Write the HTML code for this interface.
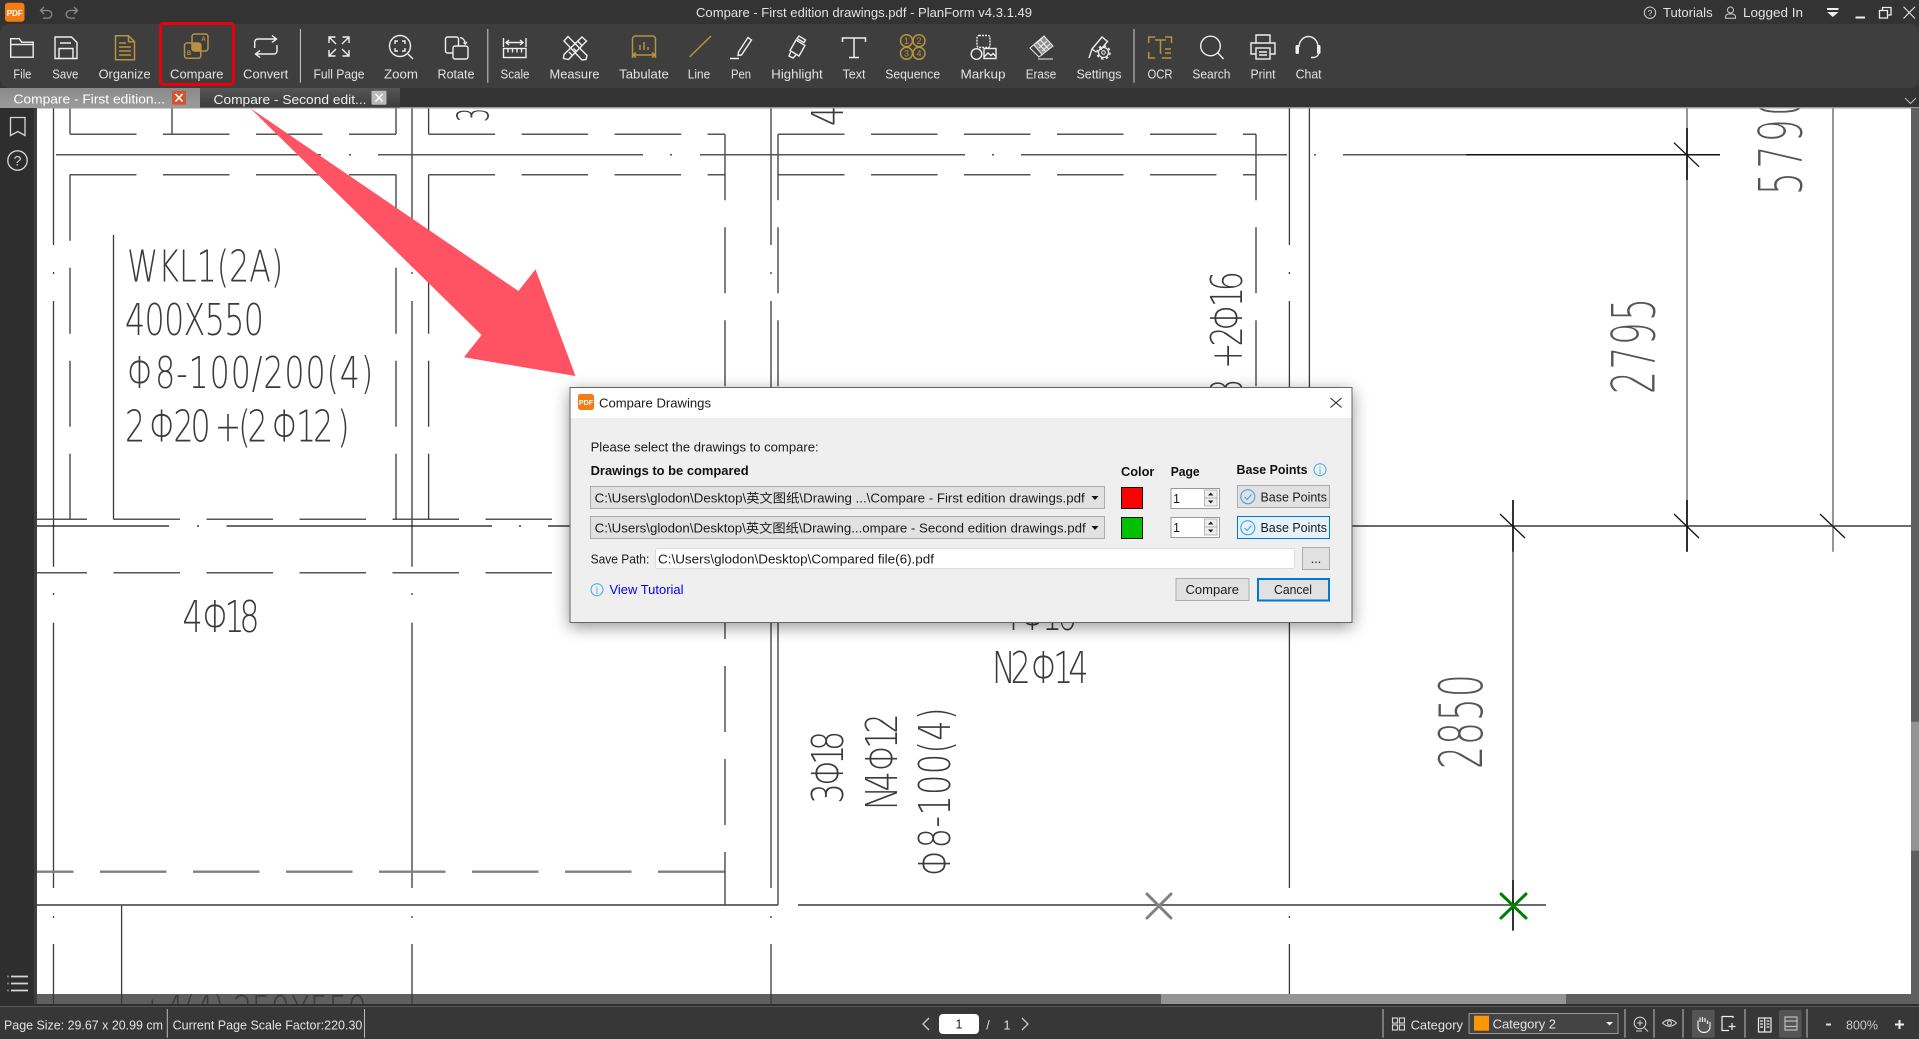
<!DOCTYPE html>
<html lang="en"><head><meta charset="utf-8"><title>Compare - First edition drawings.pdf - PlanForm v4.3.1.49</title>
<style>
html,body{margin:0;padding:0;background:#fff;overflow:hidden}
svg{display:block}
.c{font-family:"DejaVu Sans","Liberation Sans",sans-serif;font-weight:200;fill:#3a3a3a;font-size:44px}
.h{font-size:60px;fill:#555}
.t{font-family:"Liberation Sans","Noto Sans CJK SC",sans-serif;font-size:12.5px;fill:#e2e2e2}
.l{text-anchor:middle}
.d{fill:#1a1a1a}
.b{font-weight:bold;fill:#111}
.w{stroke:#eee;stroke-width:1.4;fill:none}
.g{stroke:#b8923f;stroke-width:1.5;fill:none}
</style></head><body>
<svg width="1919" height="1039" viewBox="0 0 1919 1039" xmlns="http://www.w3.org/2000/svg">
<rect width="1919" height="1039" fill="#fff"/>

<!-- drawing -->
<g fill="none" stroke="#3a3a3a" stroke-width="1.3">
<path d="M53.5 108V245M53.5 272v2M53.5 301V566.700M53.5 593v2M53.500 622.700V888M53.500 916v2M53.500 944V1039"/>
<path d="M412 108V245M412 272v2M412 301V566.700M412 593v2M412 622.700V888M412 916v2M412 944V1039"/>
<path d="M771 108V245M771 272v2M771 301V566.700M771 593v2M771 622.700V888M771 916v2M771 944V1039"/>
<path d="M1289.400 108V245M1289.400 272v2M1289.400 301V566.700M1289.400 593v2M1289.400 622.700V888M1289.400 916v2M1289.400 944V1039"/>
<path d="M1309.400 108V400"/>
<path d="M70 108v26M172 108v26M396 108v26M428.600 108v26M113.500 235V519.300M121.600 905V1039M778 622V905M1513 500V931"/>
<g stroke-dasharray="66.500 26.500" stroke="#555" stroke-width="1.500">
<path d="M70 134.300H396M428.600 134.300H725M778 134.300H1256M70 174.700H396M428.600 174.700H725M778 174.700H1256"/>
<path d="M20.500 519.300H640M20.500 572.700H640"/>
</g>
<g stroke-dasharray="66 27">
<path d="M70 174.700V519.300M396 174.700V519.300M428.600 174.700V519.300M725 134.300V400M778 134.300V400M1256 134.300V400M725 573V905"/>
</g>
<path stroke="#555" stroke-width="1.500" d="M56 154.700H321M349 154.700h2M378 154.700H643M670 154.700h2M700 154.700H965M992 154.700h2M1021 154.700H1287M1314 154.700h2M1343 154.700H1466"/>
<path stroke="#111" stroke-width="1.500" d="M1466 154.700H1720"/>
<path stroke="#111" stroke-width="1.300" d="M37 526H169M197 526h2M226.500 526H492M519 526h2M548 526H580M1352 526H1911"/>
<path stroke="#555" stroke-width="1.800" d="M37 905H778M798 905H1546"/>
<path stroke="#808080" stroke-width="2.400" stroke-dasharray="66.500 26.500" d="M7 871.700H724.500"/>
<path stroke="#8a8a8a" stroke-width="1.800" d="M1687 108V551.700M1833 108V551.700"/>
<path stroke="#111" stroke-width="1.600" d="M1687 128V180M1687 500V551.700M1513 500V551.700M1513 880V930"/>
<path stroke="#111" stroke-width="1.300" d="M1674 142.700L1699 166.700M1500 514L1525 538M1674 514L1699 538M1820 514L1845 538"/>
<path stroke="#808080" stroke-width="3" stroke-linecap="round" d="M1147 894L1171 918M1171 894L1147 918"/>
<path stroke="#008000" stroke-width="3" stroke-linecap="round" d="M1501 894L1526 918M1526 894L1501 918"/>
</g>

<g>
<text class="c" transform="translate(127 281.700) scale(.72 1)" textLength="217">WKL1(2A)</text>
<text class="c" transform="translate(125 335) scale(.72 1)" textLength="193">400X550</text>
<text class="c" transform="translate(127 388) scale(.72 1)" textLength="342">Φ8-100/200(4)</text>
<text class="c" transform="translate(125 441.700) scale(.72 1)" textLength="312">2 Φ20 +(2 Φ12 )</text>
<text class="c" transform="translate(182.500 632) scale(.72 1)" textLength="107">4 Φ18</text>
<text class="c" transform="translate(992 683) scale(.72 1)" textLength="134">N2 Φ14</text>
<text class="c" transform="translate(1000 630) scale(.72 1)" textLength="107">4 Φ16</text>
<text class="c" transform="translate(139 1027) scale(.72 1)" textLength="317">+4(4) 250X550</text>
<text class="c" transform="translate(488.600 122) rotate(-90) scale(.5 1)">3</text>
<text class="c" transform="translate(843 126) rotate(-90) scale(.72 1)">4</text>
<text class="c" transform="translate(1242 369) rotate(-90) scale(.72 1)" textLength="136">+2Φ16</text>
<text class="c" transform="translate(1242 399) rotate(-90) scale(.72 1)">8</text>
<text class="c h" transform="translate(1801.600 195) rotate(-90) scale(.6 1)" textLength="170">5790</text>
<text class="c h" transform="translate(1654.700 394) rotate(-90) scale(.6 1)" textLength="160">2795</text>
<text class="c h" transform="translate(1482 769) rotate(-90) scale(.6 1)" textLength="158">2850</text>
<text class="c" transform="translate(843 803.500) rotate(-90) scale(.72 1)" textLength="101">3 Φ18</text>
<text class="c" transform="translate(897 810) rotate(-90) scale(.72 1)" textLength="134">N4 Φ12</text>
<text class="c" transform="translate(950 876) rotate(-90) scale(.72 1)" textLength="234">Φ8-100(4)</text>
</g>

<!-- arrow -->
<polygon fill="#ff5263" points="250,108 518.400,291 535.500,269.300 575.500,376 464,357.300 481.600,335"/>

<!-- chrome -->
<rect x="0" y="0" width="1919" height="108" fill="#333"/>
<rect x="0" y="24" width="1919" height="64" rx="9" fill="#3e3e3e"/>
<rect x="0" y="107" width="1919" height="1.500" fill="#999"/>
<rect x="0" y="108" width="34" height="898" fill="#2e2e2e"/>
<rect x="34" y="108" width="3" height="898" fill="#3e3e3e"/>
<rect x="1911" y="108" width="8" height="886" fill="#5f5f5f"/>
<rect x="1911" y="721.700" width="8" height="129" fill="#949494"/>
<rect x="37" y="994" width="1882" height="10" fill="rgba(60,60,60,.82)"/>
<rect x="1161" y="994" width="405" height="10" fill="#949494"/>
<rect x="0" y="1004" width="1919" height="35" fill="#373737"/>
<rect x="0" y="1004" width="1919" height="2" fill="#2e2e2e"/>
<rect x="0" y="1006" width="1919" height="1" fill="#5a5a5a"/>

<!-- title bar -->
<rect x="5" y="2.700" width="19.500" height="19" rx="3" fill="#f57c14"/>
<text x="14.700" y="16" text-anchor="middle" style="font:bold 8px 'Liberation Sans',sans-serif;fill:#fff">PDF</text>
<g fill="none" stroke="#8a8a8a" stroke-width="1.300">
<path d="M44 7l-3.500 3.500 3.500 3.500M41 10.500h7a3.800 3.800 0 0 1 0 7.600h-5"/>
<path d="M74 7l3.500 3.500-3.500 3.500M77 10.500h-7a3.800 3.800 0 0 0 0 7.600h5"/>
</g>
<text class="t" x="696" y="17" textLength="336" lengthAdjust="spacingAndGlyphs">Compare - First edition drawings.pdf - PlanForm v4.3.1.49</text>
<circle cx="1650" cy="12.700" r="5.700" fill="none" stroke="#ccc"/>
<text x="1650" y="16" text-anchor="middle" style="font:8.500px 'Liberation Sans',sans-serif;fill:#ddd">?</text>
<text class="t" x="1663" y="17" textLength="49.600" lengthAdjust="spacingAndGlyphs">Tutorials</text>
<circle cx="1730.500" cy="10" r="3" fill="none" stroke="#ccc"/>
<path d="M1725.500 18.300v-1.300a3 3 0 0 1 3-3h4a3 3 0 0 1 3 3v1.300z" fill="none" stroke="#ccc"/>
<text class="t" x="1743" y="17" textLength="60" lengthAdjust="spacingAndGlyphs">Logged In</text>
<rect x="1827" y="8" width="11.500" height="2" fill="#eee"/><path d="M1827 12h11.500l-5.700 5z" fill="#eee"/>
<rect x="1855.500" y="16.500" width="9.500" height="2" fill="#eee"/>
<path d="M1879.500 10.500h8v7.500h-8zM1882.500 10.500v-3h8.500v7.500h-3.500" fill="none" stroke="#eee" stroke-width="1.300"/>
<path d="M1903.500 6.700L1915 18.500M1915 6.700L1903.500 18.500" stroke="#e4e4e4" stroke-width="1.100"/>

<!-- ribbon labels -->
<g>
<text class="t l" x="22.400" y="78.500" textLength="18" lengthAdjust="spacingAndGlyphs">File</text>
<text class="t l" x="65.300" y="78.500" textLength="26" lengthAdjust="spacingAndGlyphs">Save</text>
<text class="t l" x="124.600" y="78.500" textLength="52" lengthAdjust="spacingAndGlyphs">Organize</text>
<text class="t l" x="196.800" y="78.500" textLength="53.500" lengthAdjust="spacingAndGlyphs">Compare</text>
<text class="t l" x="265.700" y="78.500" textLength="45" lengthAdjust="spacingAndGlyphs">Convert</text>
<text class="t l" x="339" y="78.500" textLength="51" lengthAdjust="spacingAndGlyphs">Full Page</text>
<text class="t l" x="401" y="78.500" textLength="34" lengthAdjust="spacingAndGlyphs">Zoom</text>
<text class="t l" x="456" y="78.500" textLength="37" lengthAdjust="spacingAndGlyphs">Rotate</text>
<text class="t l" x="515" y="78.500" textLength="29" lengthAdjust="spacingAndGlyphs">Scale</text>
<text class="t l" x="574.500" y="78.500" textLength="50" lengthAdjust="spacingAndGlyphs">Measure</text>
<text class="t l" x="644" y="78.500" textLength="49.600" lengthAdjust="spacingAndGlyphs">Tabulate</text>
<text class="t l" x="699" y="78.500" textLength="22.400" lengthAdjust="spacingAndGlyphs">Line</text>
<text class="t l" x="741" y="78.500" textLength="20" lengthAdjust="spacingAndGlyphs">Pen</text>
<text class="t l" x="797" y="78.500" textLength="51.400" lengthAdjust="spacingAndGlyphs">Highlight</text>
<text class="t l" x="854" y="78.500" textLength="23" lengthAdjust="spacingAndGlyphs">Text</text>
<text class="t l" x="912.700" y="78.500" textLength="55" lengthAdjust="spacingAndGlyphs">Sequence</text>
<text class="t l" x="983" y="78.500" textLength="45" lengthAdjust="spacingAndGlyphs">Markup</text>
<text class="t l" x="1041" y="78.500" textLength="30.600" lengthAdjust="spacingAndGlyphs">Erase</text>
<text class="t l" x="1099" y="78.500" textLength="45" lengthAdjust="spacingAndGlyphs">Settings</text>
<text class="t l" x="1160" y="78.500" textLength="25" lengthAdjust="spacingAndGlyphs">OCR</text>
<text class="t l" x="1211.400" y="78.500" textLength="38" lengthAdjust="spacingAndGlyphs">Search</text>
<text class="t l" x="1263" y="78.500" textLength="25" lengthAdjust="spacingAndGlyphs">Print</text>
<text class="t l" x="1308.600" y="78.500" textLength="26" lengthAdjust="spacingAndGlyphs">Chat</text>
</g>
<path d="M300.400 29V82.700M487.800 29V82.700M1134 29V82.700" stroke="#ccc" stroke-width="1"/>
<rect x="160.500" y="23.500" width="73" height="61" rx="3" fill="none" stroke="#e8000b" stroke-width="3"/>

<!-- ribbon icons -->
<g class="w">
<path d="M10.700 38.700h8.500l2.500 3.500h11.500v15h-22.500zM10.700 44.500h22.500"/>
<path d="M55 37h16.500l5.500 5.500v16h-22zM59 58.500v-10h14v10M60 43h11"/>
<path d="M254.700 48v-6a3 3 0 0 1 3-3h19M272 35.500l4.500 3.500-4.500 3.500M277 45v6a3 3 0 0 1-3 3h-19M260 50.500l-4.500 3.500 4.500 3.500"/>
<path d="M336 44l-7-7M329 43v-6h6.500M342 44l7-7M342.500 37h6.500v6M336 49l-7 7M329 50v6h6.500M342 49l7 7M349 50v6h-6.500"/>
<circle cx="400" cy="46" r="10.500"/><path d="M408 54l5 5M395 44v-3h3M402 41h3v3M405 48v3h-3M398 51h-3v-3"/>
<rect x="445.500" y="37" width="13" height="16" rx="2"/><rect x="453" y="46" width="15" height="13" rx="2" fill="#3e3e3e"/><path d="M460 37.500a6 6 0 0 1 5 5M463.500 42.500l1.700 1.500 1.700-2"/>
<path d="M503.500 38v9M526 38v9M506 42.500h17M509 40l-3 2.500 3 2.500M520 40l3 2.500-3 2.500"/><rect x="503.500" y="48.500" width="22.500" height="9"/><path d="M508 48.500v4M512.500 48.500v4M517 48.500v4M521.500 48.500v4"/>
<path d="M564 41l4-4.500 19 19-1 4-4 .5zM582 37l4.500 4-18 18.500-5-1 .5-4zM578 41.500l4 4M572 55l-3-3M576 51l-2.500-2.500"/>
<path d="M741 55l-3 .5.5-3.500L748 37.500l3.500 2.500-10 15zM730 58.500h9"/>
<path d="M797 38.500l2-2.500 6.500 4-1.500 2.500zM796 40l9 5.500-6 10.500-9-5.500zM791 51l-2 5 4 2 3-3"/>
<path d="M842.500 42v-4h23v4M854 38v19M849 57.500h10" stroke-width="1.500"/>
<rect x="977" y="35.500" width="13" height="12" rx="2" stroke-dasharray="2 1"/><circle cx="976.500" cy="54" r="5.300"/><rect x="984" y="48.500" width="12" height="10"/><path d="M984 57l4-4 3 2.500 2-2 3 3"/>
<polygon points="1044,36 1053,46 1042.500,55 1034,45" fill="#8f8f8f" stroke="none"/>
<path d="M1044 36l9 10-14 11-9-9zM1034 45l8.500 10M1038 59h15M1037 42l9 10M1040 39.500l9 10M1043 37.500l-7 6M1047 41l-8 7M1050 44l-8 7" stroke-width="1"/>
<path d="M1089 58l3-9 10-12 5.500 4.500-7 8.500M1092 49l4 3"/>
<circle cx="1103.500" cy="52.500" r="5" stroke-width="1.200"/><circle cx="1103.500" cy="52.500" r="6.500" stroke-width="1.600" stroke-dasharray="2.500 2.600"/><circle cx="1103.500" cy="52.500" r="1.800" stroke-width="1"/>
<circle cx="1210.500" cy="46" r="9.800"/><path d="M1218 53l5.500 6"/>
<path d="M1256 43v-8h14v8M1256 54h-5v-11h24v11h-5"/><rect x="1256" y="48" width="14" height="11"/><path d="M1259 52h8M1259 55h8"/>
<path d="M1299 47a9.500 10.500 0 0 1 19 0M1318.500 54a6 4 0 0 1-5.500 3.500h-2"/>
<rect x="1295.500" y="45" width="3.500" height="9" rx="1.500" fill="#eee" stroke="none"/><rect x="1317" y="45" width="3.500" height="9" rx="1.500" fill="#eee" stroke="none"/>
</g>
<g class="g">
<path d="M115.500 35.700h13l6 6v18h-19zM128.500 35.700v6h6M119 43h7M119 47h12M119 51h12M119 55h12"/>
<rect x="192" y="34" width="16" height="17" rx="2.500"/><rect x="184.500" y="43" width="16.300" height="15.300" rx="2.500"/>
<path d="M632.500 58v-19a3 3 0 0 1 3-3h17a3 3 0 0 1 3 3v19M640 50v-5M644 50v-8M648 50v-3M633 55h22M636 52.500l-3 2.500 3 2.500M652 52.500l3 2.500-3 2.500"/>
<path d="M689.500 57L711 36"/>
<circle cx="906.500" cy="40.700" r="6"/><circle cx="919" cy="40.700" r="6"/><circle cx="906.500" cy="53.300" r="6"/><circle cx="919" cy="53.300" r="6"/>
<path d="M1148.700 43v-6h6.500M1165 37h6.500v6M1148.700 52v6h6.500M1162 58h9.500M1155 40h11M1160.500 40v14M1165 49h6M1165 53h6"/>
</g>
<rect x="192" y="43" width="8.800" height="8" fill="#b8923f"/>
<g style="font:bold 6px 'Liberation Sans',sans-serif;fill:#b8923f" text-anchor="middle">
<text x="203.500" y="41">A</text><text x="189" y="55">B</text>
</g>
<g style="font:9px 'Liberation Sans',sans-serif;fill:#b8923f" text-anchor="middle">
<text x="906.500" y="44">1</text><text x="919" y="44">2</text><text x="906.500" y="56.500">3</text><text x="919" y="56.500">4</text>
</g>

<!-- tabs -->
<defs><linearGradient id="ta" x1="0" y1="0" x2="0" y2="1"><stop offset="0" stop-color="#8a8a8a"/><stop offset="1" stop-color="#9b9b9b"/></linearGradient>
<linearGradient id="tb" x1="0" y1="0" x2="0" y2="1"><stop offset="0" stop-color="#555"/><stop offset="1" stop-color="#3c3c3c"/></linearGradient></defs>
<rect x="0" y="88" width="200" height="19.500" fill="url(#ta)"/>
<rect x="200" y="88" width="200" height="19.500" fill="url(#tb)"/>
<text class="t" x="13.500" y="103.500" style="fill:#fff" textLength="151.500" lengthAdjust="spacingAndGlyphs">Compare - First edition...</text>
<text class="t" x="213.500" y="104" style="fill:#eee" textLength="153" lengthAdjust="spacingAndGlyphs">Compare - Second edit...</text>
<rect x="172" y="90.700" width="14" height="14" rx="1" fill="#d2552f"/><path d="M175.500 94l7 7.500M182.500 94l-7 7.500" stroke="#fff" stroke-width="1.600"/>
<rect x="371.500" y="90.700" width="15" height="14" rx="1" fill="#b9b9b9"/><path d="M375.500 94l7 7.500M382.500 94l-7 7.500" stroke="#fff" stroke-width="1.600"/>
<path d="M1905 98l5.500 5.500 5.500-5.500" fill="none" stroke="#bbb"/>

<!-- sidebar -->
<g fill="none" stroke="#d6d6d6" stroke-width="1.300">
<path d="M10.500 117.500h14.500v18l-7.200-4-7.300 4z"/>
<circle cx="17.500" cy="160.500" r="9.700"/>
<path d="M7.500 976.500h1M7.500 983.500h1M7.500 990.500h1M11 976.500h17M11 983.500h17M11 990.500h17" stroke-width="1.800"/>
</g>
<text x="17.500" y="165.500" text-anchor="middle" style="font:14px 'Liberation Sans',sans-serif;fill:#d6d6d6">?</text>

<!-- status bar -->
<text class="t" x="4" y="1029.500" textLength="159" lengthAdjust="spacingAndGlyphs">Page Size: 29.67 x 20.99 cm</text>
<text class="t" x="172.600" y="1029.500" textLength="189.800" lengthAdjust="spacingAndGlyphs">Current Page Scale Factor:220.30</text>
<path d="M167.300 1009v28.700M364.500 1009v28.700M1383 1009v28.700M1625 1009v28.700M1654 1009v28.700M1683 1009v28.700M1745 1009v28.700M1807 1009v28.700" stroke="#bbb"/>
<path d="M929 1018l-6 6 6 6M1022 1018l6 6-6 6" fill="none" stroke="#ccc" stroke-width="1.300"/>
<rect x="939" y="1014" width="40" height="20" rx="4" fill="#fff"/>
<text x="959" y="1028.500" text-anchor="middle" style="font:12.500px 'Liberation Sans',sans-serif;fill:#222">1</text>
<text class="t" x="988" y="1029.500" text-anchor="middle">/</text>
<text class="t" x="1007" y="1029.500" text-anchor="middle">1</text>
<g fill="none" stroke="#ddd" stroke-width="1.100">
<rect x="1392.500" y="1018" width="5" height="5"/><rect x="1399.500" y="1018" width="5" height="5"/><rect x="1392.500" y="1025" width="5" height="5"/><rect x="1399.500" y="1025" width="5" height="5"/>
</g>
<text class="t" x="1410.600" y="1029.500" textLength="52.400" lengthAdjust="spacingAndGlyphs">Category</text>
<rect x="1469" y="1013.500" width="149" height="20" fill="#444" stroke="#999"/>
<rect x="1474" y="1015.700" width="15" height="15" fill="#ff9800"/>
<text class="t" x="1492.600" y="1028.500" textLength="63.400" lengthAdjust="spacingAndGlyphs">Category 2</text>
<path d="M1606 1022h7l-3.500 3.500z" fill="#eee"/>
<g fill="none" stroke="#ccc" stroke-width="1.100">
<circle cx="1640" cy="1023" r="5.800"/><path d="M1644.500 1028l3.500 3.500M1637 1023h6M1640 1020v6M1636 1031h6"/>
<path d="M1662.500 1023q7-6.500 14 0q-7 6.500-14 0z"/><circle cx="1669.500" cy="1023" r="2"/>
</g>
<rect x="1692" y="1010" width="22.700" height="27.700" rx="2" fill="#555"/>
<rect x="1779" y="1010" width="22.600" height="27.700" rx="2" fill="#555"/>
<g fill="none" stroke="#eee" stroke-width="1.200">
<path d="M1698 1024v-3.500M1700 1022v-4.500M1702.500 1022v-5M1705 1022v-4M1707.500 1024v-3.500M1698 1024v3a6 5.500 0 0 0 12 0v-5"/>
<path d="M1733 1018v-1.500h-11v14h7M1732 1023v7M1728.500 1026.500h7"/>
<rect x="1758.500" y="1018" width="12.500" height="14"/><path d="M1764.700 1018v14M1760 1021h3M1760 1024h3M1760 1027h3M1766.500 1021h3M1766.500 1024h3M1766.500 1027h3"/>
<path d="M1785 1017h12v13h-12zM1785 1021h12M1785 1026.500h12" stroke="#bbb"/>
</g>
<rect x="1826" y="1023.500" width="5" height="2" fill="#ddd"/>
<text class="t" x="1846" y="1029.500" textLength="32" lengthAdjust="spacingAndGlyphs" style="fill:#c8c8c8">800%</text>
<path d="M1895 1024.500h9M1899.500 1020v9" stroke="#eee" stroke-width="2"/>

<!-- dialog -->
<rect x="570" y="387.500" width="782" height="235" fill="#efefef" stroke="#666" style="filter:drop-shadow(0 4px 8px rgba(0,0,0,.42))"/>
<rect x="570.500" y="388" width="781" height="30" fill="#fff"/>
<rect x="578" y="394" width="16" height="16" rx="2.500" fill="#f57c14"/>
<text x="586" y="405" text-anchor="middle" style="font:bold 7px 'Liberation Sans',sans-serif;fill:#fff">PDF</text>
<text class="t d" x="599" y="407.500" textLength="112" lengthAdjust="spacingAndGlyphs">Compare Drawings</text>
<path d="M1330.500 398l11 9.500M1341.500 398l-11 9.500" stroke="#222" stroke-width="1"/>
<text class="t d" x="590.600" y="451.500" textLength="228" lengthAdjust="spacingAndGlyphs">Please select the drawings to compare:</text>
<text class="t b" x="590.600" y="475" textLength="158" lengthAdjust="spacingAndGlyphs">Drawings to be compared</text>
<text class="t b" x="1121" y="476" textLength="33.400" lengthAdjust="spacingAndGlyphs">Color</text>
<text class="t b" x="1170.700" y="476" textLength="29" lengthAdjust="spacingAndGlyphs">Page</text>
<text class="t b" x="1236.500" y="474" textLength="71" lengthAdjust="spacingAndGlyphs">Base Points</text>
<circle cx="1320" cy="469.700" r="6" fill="none" stroke="#35a8ee"/>
<text x="1320" y="473.500" text-anchor="middle" style="font:10px 'Liberation Serif',serif;fill:#35a8ee">i</text>

<rect x="590.500" y="486.500" width="514" height="22" fill="#e1e1e1" stroke="#adadad"/>
<text class="t d" x="594.700" y="502.500" textLength="490" lengthAdjust="spacingAndGlyphs">C:\Users\glodon\Desktop\英文图纸\Drawing ...\Compare - First edition drawings.pdf</text>
<path d="M1091.500 496h7l-3.500 4z" fill="#111"/>
<rect x="590.500" y="516.500" width="514" height="22" fill="#e1e1e1" stroke="#adadad"/>
<text class="t d" x="594.700" y="532.500" textLength="491" lengthAdjust="spacingAndGlyphs">C:\Users\glodon\Desktop\英文图纸\Drawing...ompare - Second edition drawings.pdf</text>
<path d="M1091.500 526h7l-3.500 4z" fill="#111"/>

<rect x="1121.500" y="487.500" width="21" height="21" fill="#f00" stroke="#111"/>
<rect x="1121.500" y="517.500" width="21" height="21" fill="#00c000" stroke="#111"/>

<rect x="1171" y="488.500" width="48.500" height="20" fill="#fff" stroke="#999"/>
<text class="t d" x="1173" y="503">1</text>
<rect x="1171" y="517.500" width="48.500" height="20" fill="#fff" stroke="#999"/>
<text class="t d" x="1173" y="532">1</text>
<g fill="#eee" stroke="#aaa" stroke-width=".8">
<rect x="1204.500" y="490" width="12.500" height="8"/><rect x="1204.500" y="498" width="12.500" height="8"/>
<rect x="1204.500" y="519" width="12.500" height="8"/><rect x="1204.500" y="527" width="12.500" height="8"/>
</g>
<path d="M1208 495.500l2.700-3 2.700 3zM1208 500.500l2.700 3 2.700-3zM1208 524.500l2.700-3 2.700 3zM1208 529.500l2.700 3 2.700-3z" fill="#222"/>

<rect x="1237.500" y="485.500" width="92" height="22" fill="#e1e1e1" stroke="#adadad"/>
<rect x="1237.500" y="516.500" width="92" height="22" fill="#e5f1fb" stroke="#0078d7"/>
<g fill="none" stroke="#4aa8ea" stroke-width="1.200">
<circle cx="1247.800" cy="496.700" r="7"/><path d="M1244.500 497l2.500 2.500 4.500-5"/>
<circle cx="1247.800" cy="527.700" r="7"/><path d="M1244.500 528l2.500 2.500 4.500-5"/>
</g>
<text class="t d" x="1260.500" y="501.500" textLength="66.500" lengthAdjust="spacingAndGlyphs">Base Points</text>
<text class="t d" x="1260.500" y="532" textLength="66.500" lengthAdjust="spacingAndGlyphs">Base Points</text>

<text class="t d" x="590.600" y="563.500" textLength="58.700" lengthAdjust="spacingAndGlyphs">Save Path:</text>
<rect x="655.500" y="548.500" width="639" height="20" rx="2" fill="#fff" stroke="#ddd"/>
<text class="t d" x="658" y="563.500" textLength="276" lengthAdjust="spacingAndGlyphs">C:\Users\glodon\Desktop\Compared file(6).pdf</text>
<rect x="1302.500" y="547.500" width="27" height="22" fill="#e1e1e1" stroke="#adadad"/>
<text class="t d" x="1316" y="563" text-anchor="middle">...</text>

<circle cx="597" cy="589.700" r="6" fill="none" stroke="#35a8ee"/>
<text x="597" y="593.500" text-anchor="middle" style="font:10px 'Liberation Serif',serif;fill:#35a8ee">i</text>
<text class="t" x="609.500" y="594" style="fill:#0000ff" textLength="74" lengthAdjust="spacingAndGlyphs">View Tutorial</text>

<rect x="1176" y="578.500" width="73" height="22" fill="#e1e1e1" stroke="#adadad"/>
<text class="t d" x="1185.500" y="594" textLength="53.500" lengthAdjust="spacingAndGlyphs">Compare</text>
<rect x="1258" y="579" width="71" height="21.500" fill="#e1e1e1" stroke="#0078d7" stroke-width="2"/>
<text class="t d" x="1274" y="594" textLength="38" lengthAdjust="spacingAndGlyphs">Cancel</text>
</svg>
</body></html>
